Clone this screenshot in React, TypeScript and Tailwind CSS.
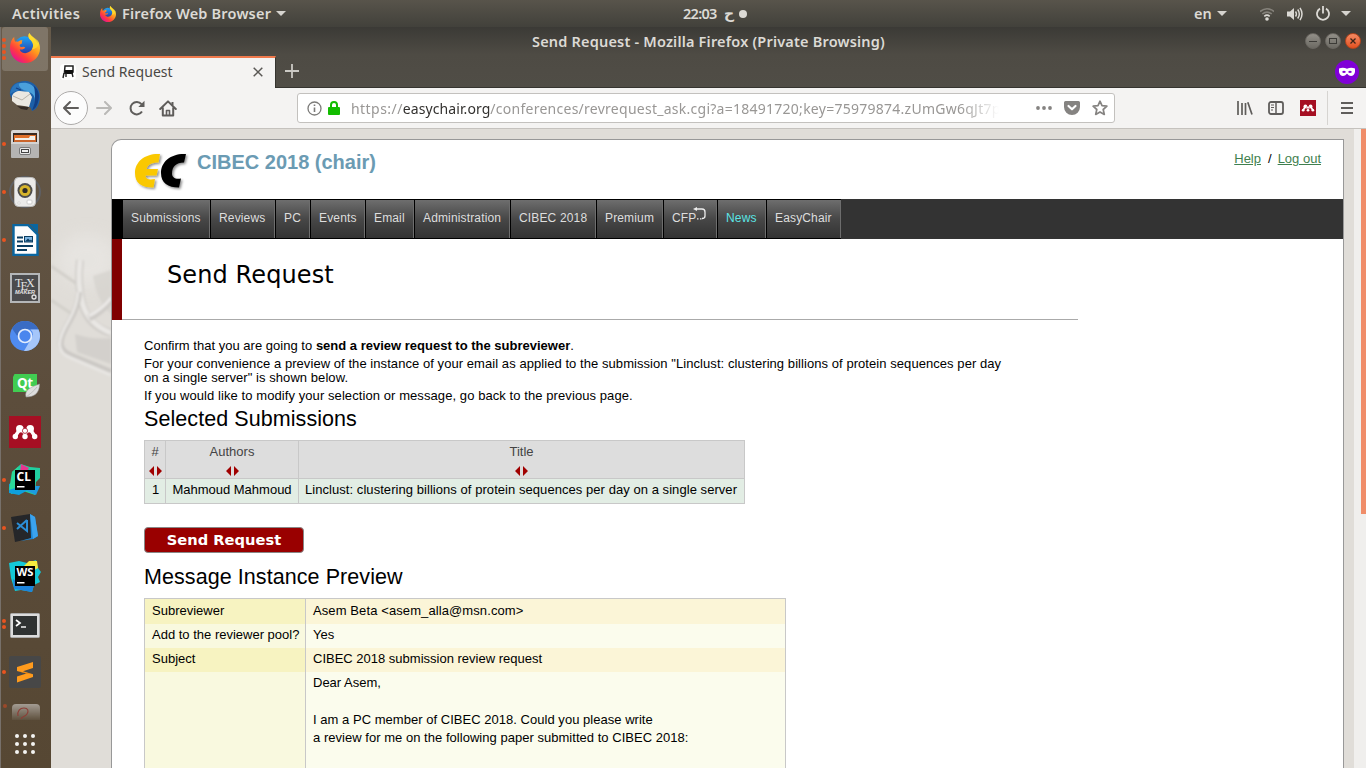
import React from "react";

type P = { children?: React.ReactNode };

function FirefoxIcon({ size, id }: { size: number; id: string }) {
  return (
    <svg width={size} height={size} viewBox="0 0 32 32">
      <defs>
        <linearGradient id={id + "a"} x1="0.85" y1="0.1" x2="0.2" y2="0.9">
          <stop offset="0" stopColor="#ffe93a" />
          <stop offset="0.4" stopColor="#ff9a1c" />
          <stop offset="0.75" stopColor="#ff3d3d" />
          <stop offset="1" stopColor="#e8158a" />
        </linearGradient>
        <linearGradient id={id + "b"} x1="0.5" y1="0" x2="0.5" y2="1">
          <stop offset="0" stopColor="#1fa4f5" />
          <stop offset="1" stopColor="#2a2f9c" />
        </linearGradient>
      </defs>
      <circle cx="15.500" cy="14" r="10.500" fill={`url(#${id}b)`} />
      <path
        d="M20.500 0c-1.600 3-.9 5.500 1.400 7.500 3 2.700 3.600 7 1.400 10.200-2.200 3.100-6.500 4.600-9.600 3.300-2.200-.9-3.400-2.500-3.200-3.700 2.200.6 4.200-.2 5.800-1.700-.8-1-2.300-1-3.200-.8-1.800.4-3-.8-2.700-2.300.8-.4 1.800-.9 2.600-1.600-.4-.9-.5-2 .3-3.200-2.200-.2-3.700.4-4.900 1.600-1-.1-2-.2-2.900 0C4.600 7.500 4.300 5.700 4.600 4 1.300 6.700-.3 11.500.1 17.300.6 25.400 7.600 32 16 32c9.200 0 16-7.200 16-15.600 0-3-.9-5.800-2.200-7.600-.1 1-.3 1.500-.6 2.100C27.800 6.300 23.300 4.500 20.500 0z"
        fill={`url(#${id}a)`}
      />
      <path d="M20.500 0c-1.600 3-.9 5.500 1.400 7.500 3 2.700 3.600 7 1.400 10.200 6-1 8.500-5 6.500-9.400C27 5.500 23 4 20.500 0z" fill="#ffe02e" opacity=".75" />
    </svg>
  );
}

function Thunderbird() {
  return (
    <svg width="32" height="30" viewBox="0 0 32 30">
      <path d="M1 14C0 7 5 2 10 1c6-2 13-1 17 4 4 5 5 11 3 17-1 4-4 7-7 8-1-2-1-3-2-4L5 21z" fill="#1c5fa8" />
      <path d="M8 3c8-3 15-1 19 6 3 6 2 13-2 18 2-8 1-14-5-16-5 0-7-2-12-8z" fill="#4aa0dc" />
      <path d="M25 5c5 4 6 10 4 16-1 4-3 7-6 8 3-5 4-14 2-24z" fill="#123f86" />
      <path d="M3 15c1-3 4-5 8-5l9 1 3 5-3 10-5-1-7-1-5-4z" fill="#ebe8e1" />
      <path d="M4 15l9 4 8-6" fill="none" stroke="#b9b4aa" />
      <path d="M8 25l12 1-2 3-6-1z" fill="#332a24" />
      <path d="M1 13C2 7 5 2 10 2c-1 5 3 7 9 8-6-1-13-1-18 3z" fill="#2b76bd" />
      <path d="M7 7l5 2" stroke="#123f86" strokeWidth="1.200" />
    </svg>
  );
}

function Files() {
  return (
    <svg width="30" height="30" viewBox="0 0 30 30">
      <rect x="1" y="1" width="28" height="28" rx="2" fill="#d8d7d6" />
      <rect x="3" y="4" width="24" height="9" fill="#3a2a22" />
      <rect x="4" y="6" width="22" height="7" fill="#e0702a" />
      <path d="M5 9h14l1-2h5v6H5z" fill="#f2f0ea" />
      <rect x="4" y="11" width="22" height="2" fill="#c9652c" />
      <rect x="1" y="13" width="28" height="16" rx="1.500" fill="#b5b4b3" />
      <rect x="1" y="13" width="28" height="2" fill="#d4d3d2" />
      <rect x="9.500" y="18.500" width="11" height="7" rx="1.500" fill="#e8e8e8" stroke="#777" />
      <rect x="11.500" y="20.500" width="7" height="3" fill="#eee" stroke="#444" />
    </svg>
  );
}

function Speaker() {
  return (
    <svg width="32" height="32" viewBox="0 0 32 32">
      <circle cx="16" cy="16" r="15" fill="none" stroke="#5b6f8e" strokeWidth="2" opacity=".45" />
      <rect x="5.500" y="1.500" width="21" height="29" rx="4" fill="#ebebea" stroke="#bdbdbc" />
      <circle cx="16" cy="14.500" r="7.500" fill="#4d4d4d" />
      <circle cx="16" cy="14.500" r="5.500" fill="#d6b42b" />
      <circle cx="16" cy="14.500" r="2.600" fill="#2c2a28" />
      <rect x="18" y="24" width="5" height="4" rx="1" fill="#fff" stroke="#ccc" />
      <circle cx="10" cy="27" r="1.200" fill="#fff" stroke="#bbb" strokeWidth=".5" />
    </svg>
  );
}

function Writer() {
  return (
    <svg width="28" height="32" viewBox="0 0 28 32">
      <path d="M2.500 1H17l9.500 9.500V31h-24z" fill="#fdfdfd" stroke="#0a66a0" strokeWidth="2.400" />
      <path d="M18.500 0H27v9z" fill="#0a66a0" />
      <path d="M6 13.500h6M6 17.500h6M6 22h16M6 26h10" stroke="#0b3d60" strokeWidth="2" />
      <rect x="13.500" y="12.500" width="8" height="5.500" fill="#7db5e2" stroke="#0b3d60" />
      <path d="M14 17.500l3-3 2 2 1-1 1.500 2z" fill="#0b3d60" />
    </svg>
  );
}

function TexMaker() {
  return (
    <svg width="30" height="30" viewBox="0 0 30 30">
      <rect x="1" y="1" width="28" height="28" fill="#4b4b4d" stroke="#b4b6b8" strokeWidth="2" />
      <text x="5" y="13.500" fill="#e3e3e3" fontSize="12" fontFamily="Liberation Serif, serif">T</text>
      <text x="10.500" y="16.500" fill="#e3e3e3" fontSize="12" fontFamily="Liberation Serif, serif">E</text>
      <text x="16" y="13.500" fill="#e3e3e3" fontSize="12" fontFamily="Liberation Serif, serif">X</text>
      <text x="5" y="20.500" fill="#e3e3e3" fontSize="5.500" fontWeight="700" fontStyle="italic" textLength="20" fontFamily="Liberation Sans, sans-serif">MAKER</text>
      <circle cx="24" cy="24" r="2" fill="none" stroke="#e3e3e3" strokeWidth="1.300" />
    </svg>
  );
}

function Chromium() {
  return (
    <svg width="30" height="30" viewBox="0 0 30 30">
      <circle cx="15" cy="15" r="15" fill="#4f8bf0" />
      <path d="M2 7.500A15 15 0 0 1 28.500 8.500H15a6.500 6.500 0 0 0-6 9z" fill="#3a6cc4" />
      <path d="M28.500 8.500A15 15 0 0 1 14 30l7-12a6.500 6.500 0 0 0-.5-9.500z" fill="#a5c6fa" />
      <circle cx="15" cy="15" r="6.500" fill="#4a86ee" stroke="#e3edfd" strokeWidth="1.700" />
    </svg>
  );
}

function QtCreator() {
  return (
    <svg className="mt-1" width="30" height="26" viewBox="0 0 30 26">
      <path d="M4.500 1H27v18H3V4z" fill="#41cd52" />
      <text x="7" y="14.500" fontSize="13.500" fill="#fff" fontWeight="700" fontFamily="Noto Sans, sans-serif" textLength="16">Qt</text>
      <path d="M29.500 11c0 9-5 13-13.500 13-2-7 5-10 13.500-13z" fill="#dedede" stroke="#9b9b9b" strokeWidth=".5" />
      <path d="M16 24c4-3 8-6 11-10" stroke="#aaa" strokeWidth=".6" fill="none" />
    </svg>
  );
}

function Mendeley({ size }: { size: number }) {
  return (
    <svg width={size} height={size} viewBox="0 0 32 32">
      <rect width="32" height="32" fill="#a50f23" />
      <g fill="#fff">
        <path d="M6 20.500L11 13l5 4 5-4 5 7.500" fill="none" stroke="#fff" strokeWidth="3.500" />
        <circle cx="10.800" cy="12.800" r="3.800" />
        <circle cx="21.200" cy="12.800" r="3.800" />
        <circle cx="6.300" cy="20.500" r="2.700" />
        <circle cx="16" cy="20.500" r="2.700" />
        <circle cx="25.700" cy="20.500" r="2.700" />
      </g>
      <circle cx="16" cy="14.800" r="2.600" fill="#fff" stroke="#a50f23" strokeWidth=".8" />
    </svg>
  );
}

function CLion() {
  return (
    <svg width="32" height="32" viewBox="0 0 32 32">
      <path d="M3 8l9-8 9 3 10 1v10l-4 4-1 13-12-4-12 3z" fill="#20cfa0" />
      <path d="M12 0l8 4-4 6h-5z" fill="#e8358f" />
      <path d="M0 20l8-4 13 9-11 6L0 29z" fill="#0f9fdc" />
      <path d="M20 22h11l-4 9-9-4z" fill="#1d9be0" />
      <path d="M3 8l6-5v20l-9 3z" fill="#2ad99a" />
      <rect x="6" y="6" width="20" height="20" fill="#000" />
      <text x="7.500" y="17" fontSize="11.500" fill="#fff" fontWeight="700" fontFamily="Noto Sans, sans-serif" textLength="14.500" lengthAdjust="spacingAndGlyphs">CL</text>
      <rect x="8" y="22" width="7.500" height="1.500" fill="#fff" />
    </svg>
  );
}

function VSCode() {
  return (
    <svg width="28" height="30" viewBox="0 0 28 30">
      <path d="M0 4l19-3 3 24-18 4z" fill="#252629" />
      <path d="M19 1l5 3 3 19-5 3-13 2 11-3z" fill="#1b86d6" />
      <path d="M19 1l5 3 3 19-5 3z" fill="#3ba3ee" />
      <path d="M16 7v11L6 10M16 7L6 16" fill="none" stroke="#2c8fd8" strokeWidth="2" />
    </svg>
  );
}

function WebStorm() {
  return (
    <svg width="32" height="32" viewBox="0 0 32 32">
      <path d="M0 3l10-2 8 2 9-3 2 8 3 4-3 5 2 5-6 3-2 7-11-2-6 1-4-13z" fill="#13c9d8" />
      <path d="M14 7l6-6 8 0 1 7-7 4z" fill="#f5ec3f" />
      <path d="M4 19l8 6h13l-2 7-11-2-7-1z" fill="#1d84dc" />
      <rect x="6" y="6" width="20" height="20" fill="#000" />
      <text x="7.500" y="16" fontSize="10.500" fill="#fff" fontWeight="700" fontFamily="Noto Sans, sans-serif" textLength="17" lengthAdjust="spacingAndGlyphs">WS</text>
      <rect x="8" y="22" width="7.500" height="1.500" fill="#fff" />
    </svg>
  );
}

function Terminal() {
  return (
    <svg className="mt-[3px]" width="30" height="26" viewBox="0 0 30 26">
      <rect x=".5" y=".5" width="29" height="24" rx="1" fill="#dcdcdc" stroke="#aaa" />
      <rect x="3" y="3" width="24" height="19" fill="#2f3232" />
      <path d="M6 7l4 3-4 3" fill="none" stroke="#fff" strokeWidth="1.700" />
      <path d="M11 14h5" stroke="#fff" strokeWidth="1.400" />
    </svg>
  );
}

function Sublime() {
  return (
    <svg width="32" height="32" viewBox="0 0 32 32">
      <rect width="32" height="32" rx="2" fill="#474747" />
      <path d="M8 11l16-5v6l-10 3.200 10 3V21L8 26.500v-6l9.500-3L8 15z" fill="#ff9b1d" />
      <path d="M8 15l16 3.200-6.500-.700z" fill="#d6760a" />
    </svg>
  );
}

const dock: { icon: React.ReactNode; dots: number }[] = [
  { icon: <FirefoxIcon size={30} id="dk" />, dots: 4 },
  { icon: <Thunderbird />, dots: 0 },
  { icon: <Files />, dots: 1 },
  { icon: <Speaker />, dots: 1 },
  { icon: <Writer />, dots: 1 },
  { icon: <TexMaker />, dots: 0 },
  { icon: <Chromium />, dots: 0 },
  { icon: <QtCreator />, dots: 0 },
  { icon: <Mendeley size={32} />, dots: 0 },
  { icon: <CLion />, dots: 1 },
  { icon: <VSCode />, dots: 1 },
  { icon: <WebStorm />, dots: 0 },
  { icon: <Terminal />, dots: 2 },
  { icon: <Sublime />, dots: 1 },
];

function Dots({ n }: { n: number }) {
  return (
    <div className="flex w-[9px] flex-col items-end justify-center gap-[2px] pr-[3px]">
      {Array.from({ length: n }, (_, i) => (
        <i key={i} className="size-1 rounded-full bg-[#e95420]" />
      ))}
    </div>
  );
}

function Dock() {
  return (
    <aside className="flex w-[51px] shrink-0 flex-col overflow-hidden border-l border-[#77706a] bg-linear-to-b from-[#665a4a] via-[#5c4d3c] to-[#564733]">
      <div className="-mt-[3px] flex flex-col">
        {dock.map((d, i) => (
          <div key={i} className="flex h-12 pr-[2px]">
            <div className={i === 0 ? "mt-[3px] mb-px ml-px flex w-[46px] rounded-[3px] bg-white/17" : "ml-px flex w-[46px]"}>
              <div className="-ml-[2px] flex">
                <Dots n={d.dots} />
              </div>
              <div className={i === 0 ? "flex w-[32px] justify-center pt-[6px]" : "flex w-[32px] items-center justify-center"}>{d.icon}</div>
            </div>
          </div>
        ))}
      </div>
      <div className="flex h-[24px] items-center pl-[2px] opacity-70">
        <i className="mb-1 size-1 rounded-full bg-[#b84a25]" />
        <svg className="mt-2 ml-[5px]" width="28" height="16" viewBox="0 0 28 16">
          <defs>
            <linearGradient id="fade" x1="0" y1="0" x2="0" y2="1">
              <stop offset="0" stopColor="#c4c0bb" />
              <stop offset="1" stopColor="#c4c0bb" stopOpacity=".1" />
            </linearGradient>
          </defs>
          <path d="M0 16V4a4 4 0 0 1 4-4h20a4 4 0 0 1 4 4v12z" fill="url(#fade)" />
          <path d="M6 12C5 7 8 4 12 4s5 3 3 6-5 2-6 5" fill="none" stroke="#a33c38" strokeWidth="1.200" />
        </svg>
      </div>
      <svg className="mt-[14px] ml-[14px]" width="20" height="20" viewBox="0 0 20 20" fill="#f4f4f2">
        {[2, 10, 18].map((y) => [2, 10, 18].map((x) => <circle key={x + "-" + y} cx={x} cy={y} r="2" />))}
      </svg>
    </aside>
  );
}

function Caret() {
  return (
    <svg width="10" height="5" viewBox="0 0 10 5">
      <path d="M0 0h10L5 5z" fill="#d6d4cf" />
    </svg>
  );
}

function TopBar() {
  return (
    <header className="flex h-[27px] shrink-0 items-center bg-linear-to-b from-[#58544b] to-[#42413b] font-['Noto_Sans',sans-serif] text-[14.500px] leading-none font-semibold text-[#dcdad5]">
      <div className="flex w-[100px] shrink-0 pl-3">
        <span className="tracking-[0.35px]">Activities</span>
      </div>
      <FirefoxIcon size={16} id="tb" />
      <div className="flex w-[567px] items-center gap-[5px] pl-[6px]">
        <span className="tracking-[0.2px] whitespace-nowrap">Firefox Web Browser</span>
        <Caret />
      </div>
      <div className="flex w-[511px] items-center">
        <span className="w-[41px] tracking-[-0.7px]">22:03</span>
        <span className="w-[15px] font-['DejaVu_Sans',sans-serif] text-[14px]">ح</span>
        <i className="size-2 rounded-full bg-[#dcdad5]" />
      </div>
      <span className="w-[23px]">en</span>
      <Caret />
      <svg className="ml-[33px]" width="14" height="14" viewBox="0 0 14 14" fill="none" strokeWidth="1.600">
        <path d="M0 4.500Q7-1 14 4.500" stroke="#85827b" />
        <path d="M2.300 7Q7 3.200 11.700 7" stroke="#85827b" />
        <path d="M4.300 9.300Q7 7 9.700 9.300" stroke="#dcdad5" />
        <circle cx="7" cy="12" r="1.800" fill="#dcdad5" />
      </svg>
      <svg className="ml-[13px]" width="16" height="14" viewBox="0 0 16 14" fill="none" stroke="#dcdad5" strokeWidth="1.500">
        <path d="M0 4.500h3L7 1v12L3 9.500H0z" fill="#dcdad5" stroke="none" />
        <path d="M8.500 4.500q1.800 2.500 0 5M10.700 2.500q3.300 4.500 0 9M13 .8q4 6.200 0 12.400" />
      </svg>
      <svg className="mb-px ml-[13px]" width="14" height="15" viewBox="0 0 14 15" fill="none" stroke="#dcdad5" strokeWidth="1.800">
        <path d="M4 2.600a6 6 0 1 0 6 0M7 0v7.500" />
      </svg>
      <span className="ml-[11px]">
        <Caret />
      </span>
    </header>
  );
}

function WinButton({ children, close }: P & { close?: boolean }) {
  return (
    <span
      className={
        close
          ? "flex size-4 items-center justify-center rounded-full border border-[#b5451d] bg-linear-to-b from-[#f58a62] to-[#e2501d]"
          : "flex size-4 items-center justify-center rounded-full border border-[#6a6761] bg-linear-to-b from-[#928f88] to-[#6c6a63]"
      }
    >
      {children}
    </span>
  );
}

function WindowChrome() {
  return (
    <div className="shrink-0 bg-linear-to-b from-[#3b3a36] via-[#4e4b44] via-45% to-[#504d46]">
      <div className="flex h-7 items-center font-['Noto_Sans',sans-serif]">
        <h1 className="ml-[481px] w-[773px] text-[14.500px] leading-none font-semibold tracking-[0.19px] whitespace-nowrap text-[#dcdad5]">Send Request - Mozilla Firefox (Private Browsing)</h1>
        <div className="flex gap-1">
          <WinButton>
            <svg width="10" height="10"><path d="M1 5.500h8" stroke="#3c3b37" /></svg>
          </WinButton>
          <WinButton>
            <svg width="10" height="10"><rect x="1.500" y="2.500" width="7" height="5" fill="none" stroke="#3c3b37" /></svg>
          </WinButton>
          <WinButton close>
            <svg width="10" height="10"><path d="M2.500 2.500l5 5M7.500 2.500l-5 5" stroke="#3c2418" strokeWidth="1.300" /></svg>
          </WinButton>
        </div>
      </div>
      <div className="flex h-[33px] border-b border-[#35342f]">
        <div className="mt-px flex h-[33px] w-[225px] shrink-0 items-center border-t-2 border-r border-t-[#f0794c] border-r-[#35342f] bg-[#f4f3f2] pb-[3px] font-['Noto_Sans',sans-serif]">
          <span className="ml-[9px] flex size-4 items-center justify-center rounded-sm bg-white">
            <svg width="12" height="14" viewBox="0 0 12 14">
              <path d="M3 1h8v6H2.500z" fill="none" stroke="#222" strokeWidth="1.500" />
              <path d="M3 5h8v4H2z" fill="#111" />
              <path d="M2 8L1 13M10 8l1 4M4 8v4" stroke="#222" strokeWidth="1.400" />
            </svg>
          </span>
          <span className="ml-[6px] w-[171px] text-[14px] leading-none tracking-[0.06px] text-[#494744]">Send Request</span>
          <svg width="10" height="10" viewBox="0 0 10 10"><path d="M.7.7l8.600 8.600M9.300.7L.7 9.300" stroke="#5a5855" strokeWidth="1.500" /></svg>
        </div>
        <svg className="mt-[9px] ml-[9px]" width="14" height="14" viewBox="0 0 14 14"><path d="M7 0v14M0 7h14" stroke="#cbc9c4" strokeWidth="1.800" /></svg>
        <span className="mt-[5px] mr-[7px] ml-auto flex size-6 items-center justify-center rounded-full bg-[#8000d7]">
          <svg width="16" height="10" viewBox="0 0 16 10">
            <path fillRule="evenodd" d="M0 1.500Q4-.2 8 1.700 12-.2 16 1.500V5q-1 4-4 4Q10 9 8 6.800 6 9 4 9 1 9 0 5zM3 5q2 1.800 4 0-2-2.300-4 0zm6 0q2 1.800 4 0-2-2.300-4 0z" fill="#fff" />
          </svg>
        </span>
      </div>
    </div>
  );
}

function Toolbar() {
  return (
    <div className="flex h-[41px] shrink-0 items-center border-b border-[#c5c2be] bg-[#f4f3f2]">
      <span className="ml-[3px] flex size-[34px] items-center justify-center rounded-full border border-[#adabaa] bg-[#fcfcfc]">
        <svg width="16" height="14" viewBox="0 0 16 14" fill="none" stroke="#5f5d5b" strokeWidth="2" strokeLinecap="round" strokeLinejoin="round"><path d="M7 1L1 7l6 6M1.500 7H15" /></svg>
      </span>
      <svg className="ml-[8px]" width="16" height="14" viewBox="0 0 16 14" fill="none" stroke="#bab9b7" strokeWidth="2" strokeLinecap="round" strokeLinejoin="round"><path d="M9 1l6 6-6 6M14.500 7H1" /></svg>
      <svg className="ml-[17px]" width="16" height="16" viewBox="0 0 16 16"><path d="M13 11.500A6.200 6.200 0 1 1 12.500 4.200" fill="none" stroke="#5f5d5b" strokeWidth="2" /><path d="M15.500.8V7H9.300z" fill="#5f5d5b" /></svg>
      <svg className="ml-[14px]" width="18" height="17" viewBox="0 0 18 17" fill="none" stroke="#5f5d5b" strokeWidth="2" strokeLinejoin="round"><path d="M1.200 9L9 1.400 16.800 9M3.800 7.500V15.500h10.400V7.500" strokeLinecap="round" /><path d="M7.500 15v-4.500h3V15" strokeWidth="1.600" /><path d="M13.500 2v3" /></svg>
      <div className="ml-[120px] flex h-[30px] w-[818px] items-center rounded-[3px] border border-[#c3c1be] bg-white">
        <svg className="ml-[9px]" width="15" height="15" viewBox="0 0 15 15"><circle cx="7.500" cy="7.500" r="6.500" fill="none" stroke="#7c7b79" strokeWidth="1.300" /><path d="M7.500 6.500V11M7.500 3.600v1.500" stroke="#7c7b79" strokeWidth="1.600" /></svg>
        <svg className="ml-[6px]" width="12" height="14" viewBox="0 0 12 14"><path d="M3 7V4a3 3 0 0 1 6 0v3" fill="none" stroke="#12bc00" strokeWidth="2" /><rect y="6" width="12" height="8" rx="1" fill="#12bc00" /></svg>
        <div className="ml-[11px] h-[22px] w-[648px] overflow-hidden font-['Noto_Sans',sans-serif] text-[14px] leading-[23px] whitespace-nowrap text-[#999795] mask-r-from-94% mask-r-to-100%">
          <span className="tracking-[0.45px]">https://</span>
          <span className="tracking-[0.08px] text-[#33312f]">easychair.org</span>
          <span className="tracking-[0.26px]">/conferences/revrequest_ask.cgi?a=18491720;key=75979874.zUmGw6qJt7pj</span>
        </div>
        <svg className="ml-[37px]" width="16" height="4" viewBox="0 0 16 4" fill="#858381"><circle cx="2" cy="2" r="1.900" /><circle cx="8" cy="2" r="1.900" /><circle cx="14" cy="2" r="1.900" /></svg>
        <svg className="ml-[12px]" width="16" height="14" viewBox="0 0 16 14"><path d="M1.500 0h13A1.500 1.500 0 0 1 16 1.500V6A8 8 0 0 1 0 6V1.500A1.500 1.500 0 0 1 1.500 0z" fill="#858381" /><path d="M4.500 5L8 8.300 11.500 5" fill="none" stroke="#fff" strokeWidth="2.200" strokeLinecap="round" strokeLinejoin="round" /></svg>
        <svg className="ml-[12px]" width="16" height="16" viewBox="0 0 16 16"><path d="M8 1.200l2 4.500 4.900.5-3.700 3.300 1.100 4.900L8 11.900l-4.300 2.500 1.100-4.900L1.100 6.200 6 5.700z" fill="none" stroke="#858381" strokeWidth="1.700" strokeLinejoin="round" /></svg>
      </div>
      <svg className="ml-[122px]" width="16" height="14" viewBox="0 0 16 14" stroke="#5f5d5b" strokeWidth="1.700"><path d="M1 0v14M5 2v12M8.500 2v12M10.800 1.200L15 13.500" /></svg>
      <svg className="ml-[15px]" width="16" height="14" viewBox="0 0 16 14" fill="none" stroke="#5f5d5b"><rect x="1" y="1" width="14" height="12" rx="2" strokeWidth="1.800" /><path d="M8 1v12" strokeWidth="1.500" /><path d="M3 4h3M3 6.500h3M3 9h2" /></svg>
      <span className="ml-4"><Mendeley size={16} /></span>
      <i className="ml-[11px] h-[34px] w-px bg-[#d6d4d1]" />
      <svg className="ml-[13px]" width="12" height="12" viewBox="0 0 12 12"><path d="M0 1h12M0 6h12M0 11h12" stroke="#5f5d5b" strokeWidth="2" /></svg>
    </div>
  );
}

function Backdrop() {
  return (
    <div className="w-[60px] shrink-0 overflow-hidden pt-[71px]">
      <svg width="60" height="260" viewBox="0 0 60 260">
        <defs>
          <filter id="soft" x="-20%" y="-20%" width="140%" height="140%"><feGaussianBlur stdDeviation="1.100" /></filter>
          <filter id="softer" x="-50%" y="-50%" width="200%" height="200%"><feGaussianBlur stdDeviation="8" /></filter>
        </defs>
        <ellipse cx="36" cy="60" rx="30" ry="26" fill="#ebe9e6" opacity=".6" filter="url(#softer)" />
        <g filter="url(#soft)" fill="none">
          <path d="M24 134q18 6 36 4v26L26 152z" fill="#d3d0cc" />
          <path d="M42 76q4 26 18 38V70z" fill="#d4d1cd" opacity=".7" />
          <path d="M0 66l26 18M0 100l24 16" stroke="#d3d0cb" strokeWidth="3" />
          <path d="M29 60q-3 26 3 46t28 27" stroke="#d0cdc9" strokeWidth="8" />
          <path d="M29 60q-3 26 3 45t28 28" stroke="#e9e7e4" strokeWidth="5" />
          <path d="M60 100Q50 112 38 118" stroke="#cecbc7" strokeWidth="7" />
          <path d="M60 98Q50 110 38 116" stroke="#eceae8" strokeWidth="3" />
          <path d="M28 92q-1 14-9 28c-12 20-14 30 2 36l39 16" stroke="#cbc8c4" strokeWidth="6" />
          <path d="M27 92q-1 14-9 28c-12 20-14 32 2 38l40 17" stroke="#e8e6e3" strokeWidth="3" />
        </g>
      </svg>
    </div>
  );
}

function MenuItem({ children, w, cyan }: P & { w: string; cyan?: boolean }) {
  return (
    <span className={`${w} h-[40px] border-y border-l border-black`}>
      <span
        className={`flex h-[38px] items-center border-r border-[#6d6d6d] bg-linear-to-b from-[#6e6e6e] via-[#474747] via-50% to-[#333] pb-[2px] pl-[8px] text-[12px] leading-none tracking-[0.15px] whitespace-nowrap ${cyan ? "text-[#5ce5e5]" : "text-[#dedede]"}`}
      >
        {children}
      </span>
    </span>
  );
}

function SortArrows() {
  return (
    <svg width="13" height="10" viewBox="0 0 13 10" fill="#a00000"><path d="M5 0v10L0 5zM8 0v10l5-5z" /></svg>
  );
}

function HeadCell({ children }: P) {
  return (
    <div className="flex h-[37px] flex-col items-center bg-[#ddd] pt-[3px] text-[#444]">
      <span className="leading-[16px]">{children}</span>
      <span className="mt-[6px] leading-none"><SortArrows /></span>
    </div>
  );
}

function PreviewRow({ label, children, alt, h }: P & { label: string; alt?: boolean; h: string }) {
  return (
    <div className={`${h} flex`}>
      <div className={`w-[161px] border-r border-[#c8c8c8] pl-[7px] leading-[15px] ${alt ? "bg-[#f7f3c1]" : "bg-[#f9f9df]"}`}>{label}</div>
      <div className={`flex-1 pl-[7px] leading-[15px] ${alt ? "bg-[#fbf5d7]" : "bg-[#fbfced]"}`}>{children}</div>
    </div>
  );
}

function EasyChair() {
  return (
    <main className="mt-[10px] flex w-[1233px] shrink-0 flex-col overflow-hidden rounded-tl-[10px] border border-b-0 border-[#989898] bg-white font-['Liberation_Sans',Arial,sans-serif] text-[13px] text-black">
      <div className="flex h-[59px] shrink-0">
        <svg className="mt-[11px] ml-[21px]" width="58" height="42" viewBox="0 0 58 42">
          <defs>
            <filter id="sh"><feDropShadow dx="1.500" dy="1.500" stdDeviation="1.200" floodOpacity=".45" /></filter>
          </defs>
          <g filter="url(#sh)">
            <path d="M27 3C13 2 2 10 2 22c0 10 6 14.500 18.500 14.500L22 28c-6 1-9.500.5-9.500-3.500h11L25 18H13.500c1-4 4.500-6.500 12-6.500z" fill="#fac800" />
            <path d="M53 3C39 2 28 10 28 22c0 10 7 14.500 18 14.500l2-9c-6 1-9-1-9-5 0-7 4-11 12-11z" fill="#000" />
          </g>
        </svg>
        <h2 className="mt-[10px] ml-[6px] text-[20px] leading-[24px] font-bold text-[#6b9bb3]">CIBEC 2018 (chair)</h2>
        <div className="mt-[11px] mr-[22px] ml-auto flex text-[13px] leading-[16px]">
          <a className="text-[#3f7f4f] underline">Help</a>
          <span className="mr-[6px] ml-[7px]">/</span>
          <a className="text-[#3f7f4f] underline">Log out</a>
        </div>
      </div>
      <nav className="flex h-[40px] shrink-0 bg-[#333]">
        <i className="w-[10px] bg-black" />
        <MenuItem w="w-[88px]">Submissions</MenuItem>
        <MenuItem w="w-[65px]">Reviews</MenuItem>
        <MenuItem w="w-[35px]">PC</MenuItem>
        <MenuItem w="w-[55px]">Events</MenuItem>
        <MenuItem w="w-[49px]">Email</MenuItem>
        <MenuItem w="w-[96px]">Administration</MenuItem>
        <MenuItem w="w-[86px]">CIBEC 2018</MenuItem>
        <MenuItem w="w-[67px]">Premium</MenuItem>
        <MenuItem w="w-[54px]">
          CFP
          <svg className="-ml-[3px] mb-[9px]" width="13" height="13" viewBox="0 0 13 13" fill="none" stroke="#eee" strokeWidth="1.300"><path d="M3 2h6q3 0 3 3v4q0 2.500-3 2.500" /><path d="M4 0v4L0 2z" fill="#eee" stroke="none" /><path d="M4 11.800h5" strokeDasharray="1.500 1.500" /></svg>
        </MenuItem>
        <MenuItem w="w-[49px]" cyan>News</MenuItem>
        <MenuItem w="w-[75px]">EasyChair</MenuItem>
      </nav>
      <div className="flex h-[81px] w-[966px] shrink-0">
        <i className="w-[10px] bg-[#800000]" />
        <div className="flex-1 border-b border-[#aaa] pl-[45px]">
          <h1 className="mt-[22px] font-['DejaVu_Sans',sans-serif] text-[24px] leading-[28px] tracking-[0.1px]">Send Request</h1>
        </div>
      </div>
      <div className="flex flex-col pl-[32px]">
        <p className="mt-[18px] leading-[15px]"><span className="tracking-[0.02px]">Confirm that you are going to </span><b>send a review request to the subreviewer</b>.</p>
        <p className="mt-[4px] leading-[14px] tracking-[0.062px]">For your convenience a preview of the instance of your email as applied to the submission "Linclust: clustering billions of protein sequences per day<br />on a single server" is shown below.</p>
        <p className="mt-[3px] leading-[15px] tracking-[0.08px]">If you would like to modify your selection or message, go back to the previous page.</p>
        <h3 className="mt-[3px] text-[21.500px] leading-[26px] tracking-[0.07px]">Selected Submissions</h3>
        <div className="mt-[8px] grid w-[601px] grid-cols-[20px_132px_445px] gap-px border border-[#c8c8c8] bg-[#c8c8c8]">
          <HeadCell>#</HeadCell>
          <HeadCell>Authors</HeadCell>
          <HeadCell>Title</HeadCell>
          <div className="h-[24px] bg-[#e2ede4] pt-[3px] pl-px text-center leading-[15px]">1</div>
          <div className="bg-[#e2ede4] pt-[3px] text-center leading-[15px]">Mahmoud Mahmoud</div>
          <div className="bg-[#e2ede4] pt-[3px] pl-[6px] leading-[15px] tracking-[0.055px]">Linclust: clustering billions of protein sequences per day on a single server</div>
        </div>
        <button className="mt-[23px] h-[26px] w-[160px] rounded-[4px] border border-[#888] bg-[#900] pt-px font-['DejaVu_Sans',sans-serif] text-[14.670px] leading-none font-bold text-white">Send Request</button>
        <h3 className="mt-[11px] text-[21.500px] leading-[26px] tracking-[0.07px]">Message Instance Preview</h3>
        <div className="mt-[8px] w-[642px] border border-[#c8c8c8]">
          <PreviewRow label="Subreviewer" h="h-[25px] *:pt-[4px]" alt><span className="tracking-[0.1px]">Asem Beta &lt;asem_alla@msn.com&gt;</span></PreviewRow>
          <PreviewRow label="Add to the reviewer pool?" h="h-[24px] *:pt-[3px]">Yes</PreviewRow>
          <PreviewRow label="Subject" h="h-[24px] *:pt-[3px]" alt>CIBEC 2018 submission review request</PreviewRow>
          <PreviewRow label="" h="h-[130px] *:pt-[3px]">
            <p>Dear Asem,</p>
            <p className="mt-[21px] leading-[18px] tracking-[0.03px]">I am a PC member of CIBEC 2018. Could you please write<br />a review for me on the following paper submitted to CIBEC 2018:</p>
          </PreviewRow>
        </div>
      </div>
    </main>
  );
}

export default function App() {
  return (
    <div className="flex h-[768px] w-[1366px] flex-col overflow-hidden">
      <TopBar />
      <div className="flex min-h-0 flex-1">
        <Dock />
        <div className="flex min-w-0 flex-1 flex-col">
          <WindowChrome />
          <Toolbar />
          <div className="flex min-h-0 flex-1 overflow-hidden bg-[#e0ddd8]">
            <Backdrop />
            <EasyChair />
            <div className="ml-auto flex w-[12px] bg-[#f0efed] pl-[7px]">
              <i className="h-[385px] w-[5px] bg-[#f08d69]" />
            </div>
          </div>
        </div>
      </div>
    </div>
  );
}
